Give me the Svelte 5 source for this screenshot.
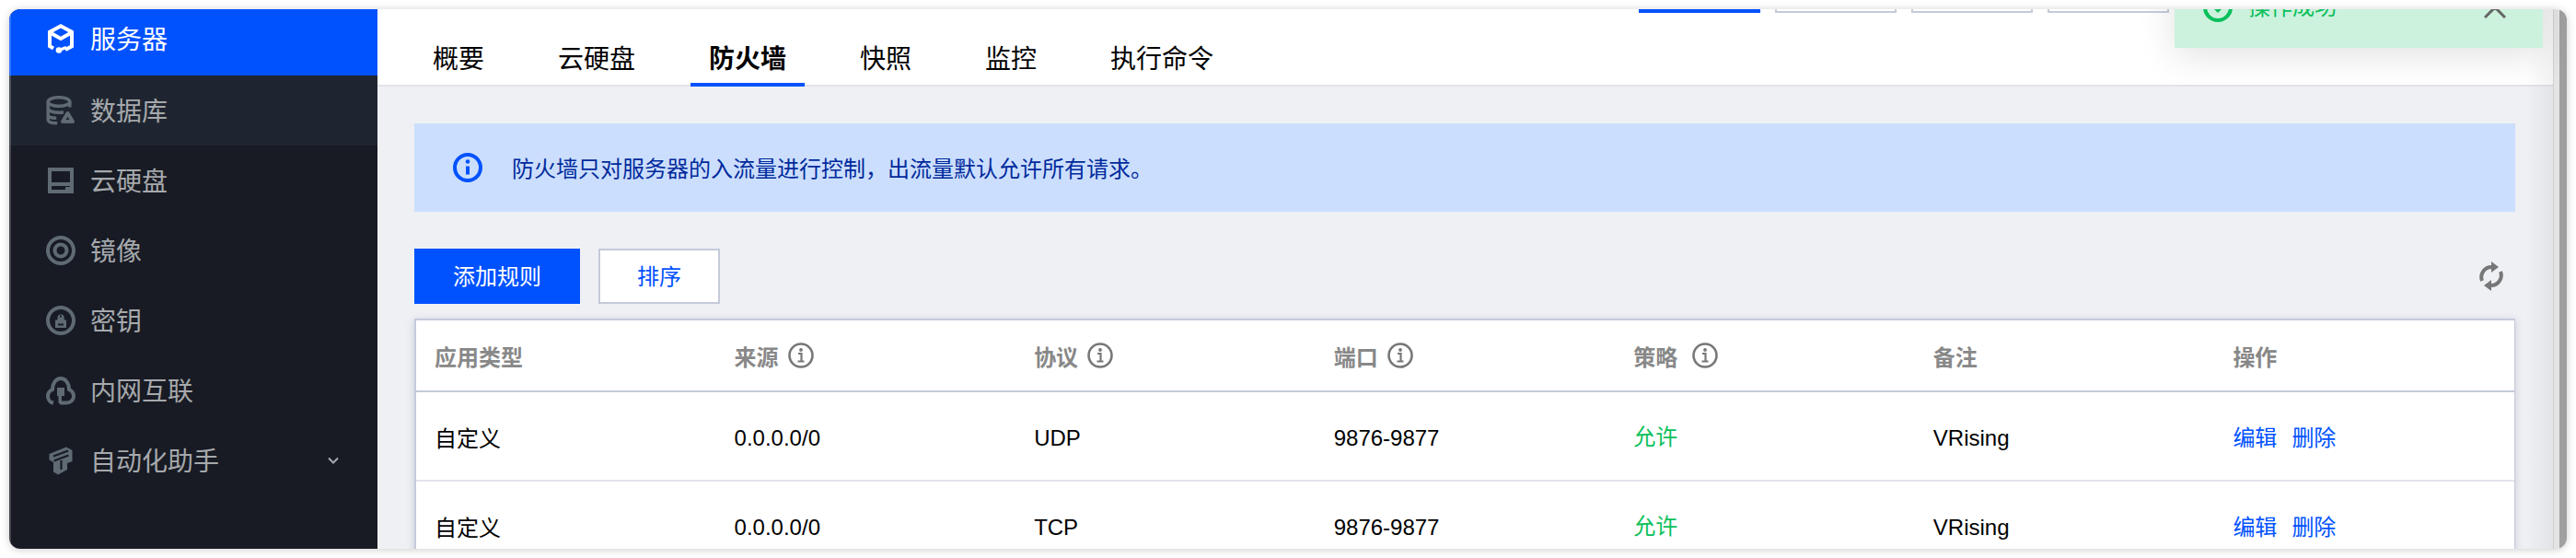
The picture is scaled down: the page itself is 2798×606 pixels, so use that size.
<script>
    const menu = [
        { key: 'server', label: '服务器', active: true },
        { key: 'db', label: '数据库', hover: true },
        { key: 'disk', label: '云硬盘' },
        { key: 'image', label: '镜像' },
        { key: 'key', label: '密钥' },
        { key: 'net', label: '内网互联' },
        { key: 'auto', label: '自动化助手', more: true }
    ];

    const tabs = ['概要', '云硬盘', '防火墙', '快照', '监控', '执行命令'];

    const columns = [
        { label: '应用类型' },
        { label: '来源', info: true },
        { label: '协议', info: true },
        { label: '端口', info: true },
        { label: '策略', info: true, wide: true },
        { label: '备注' },
        { label: '操作' }
    ];

    const rules = [
        { type: '自定义', source: '0.0.0.0/0', protocol: 'UDP', port: '9876-9877', policy: '允许', note: 'VRising' },
        { type: '自定义', source: '0.0.0.0/0', protocol: 'TCP', port: '9876-9877', policy: '允许', note: 'VRising' }
    ];
</script>

<svelte:head>
    <title>防火墙</title>
</svelte:head>

<div class="window">
    <aside class="sidebar">
        {#each menu as item}
            <div class="menu-item" class:active={item.active} class:hover={item.hover}>
                <svg class="menu-icon" viewBox="0 0 32 32" fill="none" stroke="currentColor" stroke-width="4">
                    {#if item.key === 'server'}
                        <path d="M8 26.500 4 24.200V8.700L16 2.300l12 6.400v15.500L21 28" />
                        <path d="M4.500 9.500 16 16l11.500-6.500" />
                        <path d="M14 28.500l8-3" stroke-width="3" />
                        <circle cx="14" cy="28.500" r="3.300" fill="currentColor" stroke="none" />
                    {:else if item.key === 'db'}
                        <ellipse cx="14" cy="6.500" rx="11.800" ry="4.800" stroke-width="3.500" />
                        <path d="M2.200 6.500v7c0 2.500 5 4.800 11.800 4.800 2 0 3.500-.2 5-.6M25.800 6.500v6" stroke-width="3.500" />
                        <path d="M2.200 13.500v12.500c0 2.500 4 3.800 10 3.800M2.200 21c0 2 3.500 3.300 9 3.300" stroke-width="3.500" />
                        <path d="M23.500 19l5.500 9H18z" stroke-linejoin="round" stroke-width="4" />
                    {:else if item.key === 'disk'}
                        <path d="M4 4h24v24H4zM4 20h24" />
                        <path d="M21 24.500h5" stroke-width="3" />
                    {:else if item.key === 'image'}
                        <circle cx="16" cy="16" r="14" />
                        <circle cx="16" cy="16" r="6.500" />
                    {:else if item.key === 'key'}
                        <circle cx="16" cy="16" r="14" />
                        <path d="M12.500 16v-3a3.600 3.600 0 0 1 7.200 0v3z" fill="currentColor" stroke="none" />
                        <path d="M10 15.500h12V24H10z" fill="currentColor" stroke="none" />
                        <path d="M13 20.500h6M15 11.500h2" stroke="#181b24" stroke-width="1.800" />
                    {:else if item.key === 'net'}
                        <path d="M8 29.500C4 29 2 25.500 2 22.500c0-3.500 2-6.200 5-7.500C7 8 11 3 16 3s9 5 9 12c3 1.300 5 4 5 7.500 0 4-3.500 7-8 7h-7" />
                        <path d="M12 13h8v9h-3v8h-3.500v-8H12z" fill="currentColor" stroke="none" />
                    {:else if item.key === 'auto'}
                        <path d="M3.500 9 22 1.500l6.500 3.500v12L23 19v7l-10 5.500-5-3V18l-4.500-2.500z" fill="currentColor" stroke="none" />
                        <path d="M8 11.500 24 5.500M8.500 16.500 24.500 10.500M16.500 16v10" stroke="#181b24" stroke-width="2.200" />
                    {/if}
                </svg>
                <span>{item.label}</span>
                {#if item.more}
                    <svg class="chevron" viewBox="0 0 12 8" fill="none" stroke="currentColor" stroke-width="2">
                        <path d="M1 1.500l5 5 5-5" />
                    </svg>
                {/if}
            </div>
        {/each}
    </aside>

    <main class="main">
        <div class="actions">
            <button class="btn primary">&nbsp;</button>
            <button class="btn">&nbsp;</button>
            <button class="btn">&nbsp;</button>
            <button class="btn">&nbsp;</button>
        </div>

        <nav class="tabs">
            {#each tabs as tab}
                <div class="tab" class:current={tab === '防火墙'}>{tab}</div>
            {/each}
        </nav>

        <section class="content">
            <div class="notice">
                <svg class="notice-icon" viewBox="0 0 32 32" fill="none" stroke="#0052ff">
                    <circle cx="16" cy="16" r="14" stroke-width="4" />
                    <path d="M16 14.500v9" stroke-width="4" />
                    <circle cx="16" cy="9.500" r="2.300" fill="#0052ff" stroke="none" />
                </svg>
                <span>防火墙只对服务器的入流量进行控制，出流量默认允许所有请求。</span>
            </div>

            <div class="toolbar">
                <button class="btn primary">添加规则</button>
                <button class="btn link">排序</button>
                <svg class="refresh" viewBox="0 0 28 32" fill="none" stroke="#777" stroke-width="4">
                    <path d="M4 21A11 11 0 0 1 15 6" />
                    <path d="M24 11A11 11 0 0 1 13 26" />
                    <path d="M14 0l8 6-8 6z" fill="#777" stroke="none" />
                    <path d="M14 20l-8 6 8 6z" fill="#777" stroke="none" />
                </svg>
            </div>

            <div class="card">
                <table>
                    <thead>
                        <tr>
                            {#each columns as col}
                                <th>
                                    <span class="th-inner" class:wide={col.wide}>
                                        {col.label}
                                        {#if col.info}
                                            <svg class="info" viewBox="0 0 28 28" fill="none" stroke="#777">
                                                <circle cx="14" cy="14" r="12.500" stroke-width="2.600" />
                                                <path d="M11 12h3.500v8M10.500 20.500h7" stroke-width="2.200" />
                                                <circle cx="14" cy="8" r="1.900" fill="#777" stroke="none" />
                                            </svg>
                                        {/if}
                                    </span>
                                </th>
                            {/each}
                        </tr>
                    </thead>
                    <tbody>
                        {#each rules as rule}
                            <tr>
                                <td class="kind">{rule.type}</td>
                                <td>{rule.source}</td>
                                <td>{rule.protocol}</td>
                                <td>{rule.port}</td>
                                <td class="allow">{rule.policy}</td>
                                <td>{rule.note}</td>
                                <td class="ops"><span>编辑</span><span>删除</span></td>
                            </tr>
                        {/each}
                    </tbody>
                </table>
            </div>
        </section>
    </main>

    <div class="scrollbar"><div class="thumb"></div></div>

    <div class="toast">
        <svg class="toast-icon" viewBox="0 0 32 32" fill="none" stroke="#0abf5b" stroke-width="4">
            <circle cx="16" cy="16" r="14" />
            <path d="M9 15l7 7 7-7z" fill="#0abf5b" stroke="none" />
        </svg>
        <span>操作成功</span>
        <svg class="toast-close" viewBox="0 0 24 24" fill="none" stroke="#666" stroke-width="3">
            <path d="M1 1l22 22M23 1 1 23" />
        </svg>
    </div>
</div>

<style>
    :global(body) {
        margin: 0;
        background: #fff;
        overflow: hidden;
        font-family: "Liberation Sans", "Noto Sans CJK SC", sans-serif;
    }

    .window {
        position: relative;
        display: flex;
        width: 2778px;
        height: 586px;
        margin: 10px;
        border-radius: 12px;
        overflow: hidden;
        box-shadow: 0 1px 10px rgba(0, 0, 0, 0.2);
    }

    /* faint edge of the window frame */
    .window::before {
        content: '';
        position: absolute;
        left: 0;
        top: 0;
        bottom: 0;
        width: 2px;
        background: rgba(255, 255, 255, 0.2);
        z-index: 3;
    }

    .sidebar {
        flex: none;
        width: 400px;
        background: #181b24;
    }

    .menu-item {
        display: flex;
        align-items: center;
        height: 76px;
        padding: 0 42px 0 40px;
        box-sizing: border-box;
        font-size: 28px;
        color: #a6a9ac;
    }

    .menu-item:first-child {
        height: 72px;
        padding-bottom: 4px;
    }

    .menu-item:first-child .menu-icon,
    .menu-item:first-child span {
        margin-top: -4px;
    }

    .menu-item span {
        padding-bottom: 2px;
    }

    .menu-item.active {
        background: #0052ff;
        color: #fff;
    }

    .menu-item.hover {
        background: #1f2530;
    }

    .menu-icon {
        flex: none;
        width: 32px;
        height: 32px;
        margin-right: 16px;
        color: #5f6a72;
    }

    .active .menu-icon {
        color: #fff;
    }

    .chevron {
        width: 12px;
        height: 8px;
        margin-left: auto;
        color: #a6a9ac;
    }

    .main {
        position: relative;
        flex: 1;
        min-width: 0;
        background: #eff0f4;
        overflow: hidden;
    }

    /* soft shade toward the scrollbar */
    .main::after {
        content: '';
        position: absolute;
        top: 0;
        bottom: 0;
        right: 0;
        width: 30px;
        background: linear-gradient(to right, rgba(0, 0, 0, 0), rgba(0, 0, 0, 0.05));
        pointer-events: none;
    }

    .actions {
        display: flex;
        justify-content: flex-end;
        gap: 16px;
        padding: 0 417px 0 0;
        margin-top: -56px;
        background: #fff;
    }

    .btn {
        height: 60px;
        width: 132px;
        padding: 0 0 3px;
        font: inherit;
        font-size: 24px;
        background: #fff;
        border: 2px solid #c5cadb;
        border-radius: 0;
        box-sizing: border-box;
    }

    .btn.primary {
        background: #0052ff;
        border-color: #0052ff;
        color: #fff;
    }

    .btn.link {
        color: #0052ff;
    }

    .toolbar .primary {
        width: 180px;
    }

    .tabs {
        display: flex;
        gap: 40px;
        padding-left: 40px;
        background: #fff;
        box-shadow: inset 0 -2px 0 #e2e3ea;
    }

    .tab {
        padding: 31px 20px 5px;
        font-size: 28px;
        line-height: 40px;
        color: #000;
        border-bottom: 4px solid transparent;
    }

    .tab.current {
        font-weight: 700;
        border-bottom-color: #0052ff;
    }

    .content {
        padding: 40px 41px 0 40px;
    }

    .notice {
        display: flex;
        align-items: center;
        gap: 32px;
        height: 96px;
        padding-left: 42px;
        background: #cbdefd;
        color: #002a9c;
        font-size: 24px;
    }

    .notice span {
        padding-bottom: 2px;
    }

    .notice-icon {
        width: 32px;
        height: 32px;
    }

    .toolbar {
        display: flex;
        align-items: center;
        gap: 20px;
        margin: 40px 0 16px;
    }

    .refresh {
        width: 28px;
        height: 32px;
        margin: 0 12px 0 auto;
    }

    .card {
        background: #fff;
        border: 2px solid #c5cadb;
        border-right-width: 1px;
        box-shadow: 0 2px 8px rgba(80, 90, 130, 0.25);
    }

    table {
        width: 100%;
        table-layout: fixed;
        border-collapse: separate;
        border-spacing: 0;
    }

    th,
    td {
        padding: 0 0 0 20px;
        text-align: left;
        font-size: 24px;
    }

    th {
        height: 76px;
        color: #888;
        font-weight: 700;
        border-bottom: 2px solid #c5cadb;
    }

    td {
        height: 97px;
        color: #000;
        padding-top: 5px;
        box-sizing: border-box;
        border-bottom: 2px solid #e2e4ec;
    }

    .th-inner {
        display: inline-flex;
        align-items: center;
        gap: 10px;
    }

    .th-inner.wide {
        gap: 16px;
    }

    .info {
        width: 28px;
        height: 28px;
    }

    /* CJK cells sit a little above the latin text of the row */
    .kind {
        padding-bottom: 4px;
    }

    .allow {
        color: #0abf5b;
        padding-bottom: 8px;
    }

    .ops {
        color: #0052ff;
        padding-bottom: 5px;
    }

    .ops span + span {
        margin-left: 16px;
    }

    .scrollbar {
        flex: none;
        display: flex;
        justify-content: flex-end;
        width: 15px;
        background: #e4e4e4;
        border-left: 1px solid #d0d0d0;
        box-sizing: border-box;
    }

    .thumb {
        width: 8px;
        background: #a0a0a0;
    }

    .toast {
        position: absolute;
        top: -58px;
        right: 26px;
        display: flex;
        align-items: flex-start;
        width: 400px;
        height: 100px;
        padding: 40px 40px 0 31px;
        box-sizing: border-box;
        background: #ccf2de;
        color: #0abf5b;
        font-size: 24px;
        line-height: 32px;
        box-shadow: 0 8px 40px rgba(0, 0, 0, 0.12);
        z-index: 2;
    }

    .toast-icon {
        width: 32px;
        height: 32px;
        margin-right: 17px;
    }

    .toast-close {
        width: 24px;
        height: 24px;
        margin: 4px 0 0 auto;
    }
</style>
